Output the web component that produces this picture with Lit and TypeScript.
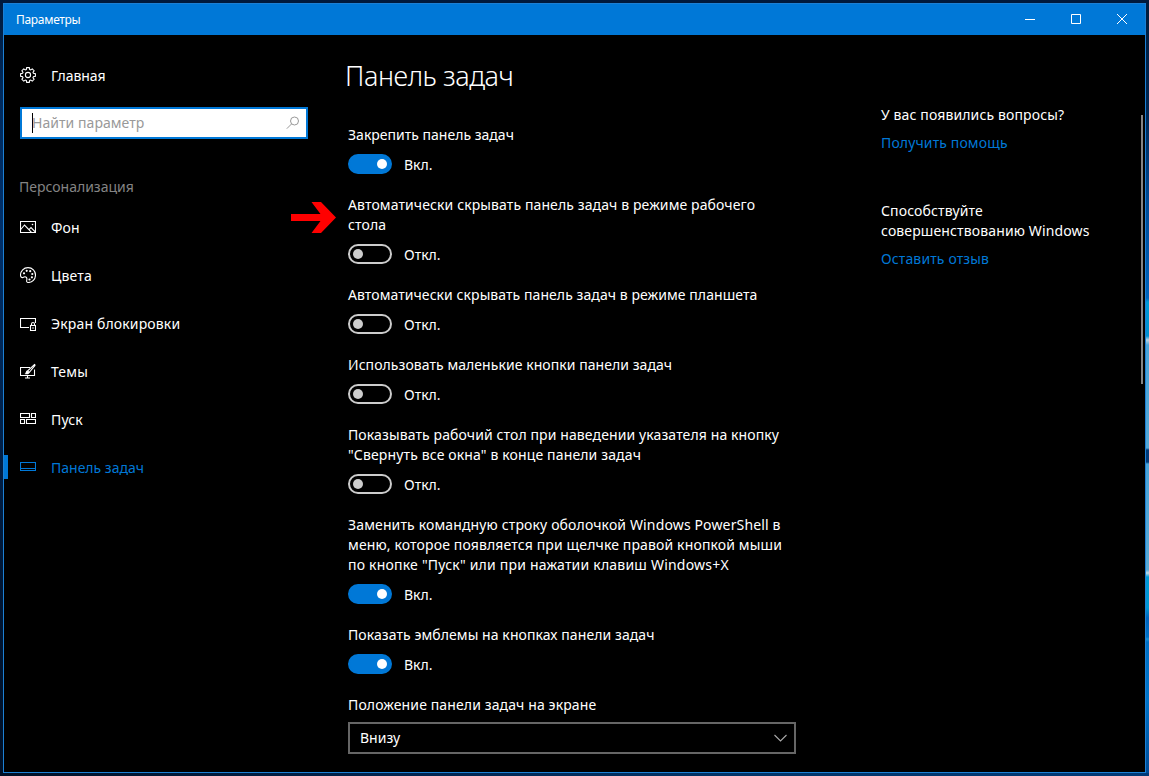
import { LitElement, html, css, svg, nothing } from "lit";
import { customElement, property } from "lit/decorators.js";
import { classMap } from "lit/directives/class-map.js";
import { styleMap } from "lit/directives/style-map.js";

const icons: Record<string, unknown> = {
  home: svg`<path d="M6.7 .6h2.6l.4 2 .9.4 1.7-1.1 1.8 1.8L13 5.4l.4.9 2 .4v2.6l-2 .4-.4.9 1.1 1.7-1.8 1.8-1.7-1.1-.9.4-.4 2H6.700l-.4-2-.9-.4-1.700 1.100-1.800-1.800L3 10.600l-.4-.9-2-.4V6.700l2-.4L3 5.400 1.900 3.700l1.800-1.800L5.400 3l.9-.4z"/><circle cx="8" cy="8" r="2.600"/>`,
  background: svg`<path d="M.5 2.500h15v11H.5z"/><path d="M.7 10.500 4.500 6l7 7.300M9 10.600l2-2 4.500 4.500"/><circle class="dot" cx="12.500" cy="5.500" r=".8"/>`,
  colors: svg`<path d="M.5 8.300C.5 4 3.700.6 8 .6c4.400 0 7.500 3.300 7.500 7.500S12.300 15.500 8.300 15.500c-1.900 0-1.800-1.500-1.500-2.700.4-1.800-.5-3-1.900-3-1.300 0-1.500.9-2.700.8C1 10.500.5 9.500.5 8.300z"/><g class="dot"><circle cx="4" cy="6.300" r="1.100"/><circle cx="6.700" cy="3.800" r="1.100"/><circle cx="10.200" cy="4.200" r="1.100"/><circle cx="12.300" cy="7" r="1.100"/><circle cx="11.900" cy="10.300" r="1.100"/><circle cx="9.500" cy="12.500" r="1.100"/></g>`,
  lock: svg`<path d="M9 12.500H.5v-9h15V8M10.500 10.500h5v5h-5zM11.500 10.300V9a1.500 1.500 0 0 1 3 0v1.300M13 12.300v1.400"/>`,
  themes: svg`<path d="M10 4.500H.5v8h14V6.500M7.500 12.500v2.500M5 15h5"/><path d="M14.600 1.400c.5.3.5.8.2 1.200L9.200 9.500 7.500 8z"/><path class="dot" d="M7 7.500l2.300 2.200c-.5 1.800-2.300 2-4.800 1.300 1.400-.4.900-2.700 2.500-3.500z"/>`,
  start: svg`<path d="M.5 2.500h9v4h-9zM11.500 2.500h4v4h-4zM.5 8.500h4v4h-4zM6.500 8.500h9v4h-9z"/>`,
  taskbar: svg`<path d="M.5 3.500h15v8H.5zM.5 9.500h15"/>`,
};

interface Line {
  text: string;
  tracking: number;
}

interface Setting {
  lines: Line[];
  on: boolean;
  marked?: boolean;
}

const settings: Setting[] = [
  { lines: [{ text: "Закрепить панель задач", tracking: 0.01 }], on: true },
  {
    lines: [
      { text: "Автоматически скрывать панель задач в режиме рабочего", tracking: 0.11 },
      { text: "стола", tracking: 0.1 },
    ],
    on: false,
    marked: true,
  },
  { lines: [{ text: "Автоматически скрывать панель задач в режиме планшета", tracking: 0.07 }], on: false },
  { lines: [{ text: "Использовать маленькие кнопки панели задач", tracking: 0.06 }], on: false },
  {
    lines: [
      { text: "Показывать рабочий стол при наведении указателя на кнопку", tracking: 0.11 },
      { text: "\"Свернуть все окна\" в конце панели задач", tracking: 0.14 },
    ],
    on: false,
  },
  {
    lines: [
      { text: "Заменить командную строку оболочкой Windows PowerShell в", tracking: 0.14 },
      { text: "меню, которое появляется при щелчке правой кнопкой мыши", tracking: 0.14 },
      { text: "по кнопке \"Пуск\" или при нажатии клавиш Windows+X", tracking: 0.21 },
    ],
    on: true,
  },
  { lines: [{ text: "Показать эмблемы на кнопках панели задач", tracking: 0.08 }], on: true },
];

const navigation = [
  { icon: "background", label: "Фон" },
  { icon: "colors", label: "Цвета" },
  { icon: "lock", label: "Экран блокировки" },
  { icon: "themes", label: "Темы" },
  { icon: "start", label: "Пуск" },
  { icon: "taskbar", label: "Панель задач", active: true },
];

@customElement("nav-entry")
export class NavEntry extends LitElement {
  @property() icon = "";
  @property() label = "";
  @property({ type: Boolean }) active = false;

  static styles = css`
    :host { display: block; }
    .entry { display: flex; align-items: center; height: 48px; padding-left: 16px; color: #fff; }
    .active { color: #0078d7; padding-left: 0; }
    .marker { width: 4px; height: 24px; background: #0078d7; margin-right: 12px; }
    svg { width: 16px; height: 16px; fill: none; stroke: currentColor; stroke-width: 1.1; margin-right: 15px; flex: none; }
    .dot { fill: currentColor; stroke: none; }
    .label { line-height: 20px; white-space: nowrap; padding-top: 1px; letter-spacing: .15px; }
    .home .label { letter-spacing: -.1px; }
    .active .label { letter-spacing: 0; }
  `;

  render() {
    return html`<div class=${classMap({ entry: true, active: this.active, home: this.icon === "home" })}>
      ${this.active ? html`<span class="marker"></span>` : nothing}
      <svg viewBox="0 0 16 16">${icons[this.icon]}</svg>
      <span class="label">${this.label}</span>
    </div>`;
  }
}

@customElement("toggle-setting")
export class ToggleSetting extends LitElement {
  @property({ attribute: false }) setting!: Setting;

  static styles = css`
    :host { display: block; position: relative; margin-bottom: 21px; }
    .line { line-height: 20px; white-space: nowrap; }
    .row { display: flex; align-items: center; gap: 12px; height: 20px; margin-top: 9px; }
    .switch { display: flex; align-items: center; box-sizing: border-box; width: 44px; height: 20px; border: 2px solid #ccc; border-radius: 10px; padding: 0 3px; }
    .knob { width: 10px; height: 10px; border-radius: 50%; background: #ccc; }
    .on { background: #0078d7; border-color: #0078d7; justify-content: flex-end; }
    .on .knob { background: #fff; }
    .state { line-height: 20px; padding-top: 2px; }
    .arrow { position: absolute; left: -57px; top: 6px; width: 46px; height: 33px; fill: #f00; }
  `;

  render() {
    const { lines, on, marked } = this.setting;
    return html`
      ${marked ? html`<svg class="arrow" viewBox="0 0 46 33"><path d="M0 13h29.500L20.500 1h9.500L45 16.500 30 32h-9.500l9-12H0z"/></svg>` : nothing}
      ${lines.map((l) => html`<div class="line" style=${styleMap({ letterSpacing: `${l.tracking}px` })}>${l.text}</div>`)}
      <div class="row">
        <div class=${classMap({ switch: true, on })}><div class="knob"></div></div>
        <span class="state">${on ? "Вкл." : "Откл."}</span>
      </div>`;
  }
}

@customElement("app-root")
export class AppRoot extends LitElement {
  static styles = css`
    :host {
      display: block; box-sizing: border-box; width: 1149px; height: 776px; padding: 3px;
      background:
        linear-gradient(#001a3c 0 3px, transparent 3px) 0 0 / 100% 3px no-repeat,
        linear-gradient(90deg, #001026, #00244f 35%, #003468 65%, #003a78) 0 100% / 100% 3px no-repeat,
        linear-gradient(#001a3c, #002a5c 12%, #00306a 30%, #002450 50%, #001634 75%, #001026) 0 0 / 3px 100% no-repeat,
        linear-gradient(#001c3c 0, #00254f 110px, #004a94 200px, #0064bc 298px, #009ad4 302px, #0090d0 336px, #b8d4e4 340px, #4aa4d8 345px, #55a8d6 448px, #003a78 450px, #003a78 462px, #4aa4d8 464px, #5aaad4 570px, #c0dcea 573px, #009ad4 577px, #0096d2 608px, #0064bc 618px, #0070c4 637px, #1890d4 639px, #0070c4 642px, #0074c8 700px, #004a94 776px);
      font-family: "Noto Sans", "Open Sans", sans-serif; font-size: 14px; color: #fff; overflow: hidden;
    }
    .window { display: flex; flex-direction: column; box-sizing: border-box; width: 1143px; height: 770px; border: 1px solid #1c80d4; background: #000; }
    .titlebar { display: flex; align-items: center; justify-content: space-between; height: 31px; background: #0078d7; padding-left: 12px; font-size: 12px; }
    .caption { line-height: 20px; letter-spacing: -.3px; }
    .controls { display: flex; }
    .control { width: 46px; height: 31px; fill: none; stroke: #fff; }
    .body { display: flex; flex: 1; min-height: 0; }
    .sidebar { width: 344px; padding-top: 16px; flex: none; }
    .search { display: flex; align-items: center; box-sizing: border-box; width: 288px; height: 32px; margin: 8px 0 0 16px; border: 2px solid #0078d7; background: #fff; padding: 0 6px 0 10px; color: #999; }
    .caret { width: 1px; height: 20px; background: #000; margin-right: -1px; }
    .placeholder { flex: 1; line-height: 20px; letter-spacing: .05px; }
    .glass { width: 14px; height: 14px; fill: none; stroke: #999; }
    .group { margin: 38px 0 6px 15px; line-height: 20px; color: #848484; }
    .content { width: 533px; flex: none; padding-top: 22px; }
    .title { margin: 0 0 30px -3px; font-size: 27px; font-weight: 350; letter-spacing: -.4px; line-height: 38px; white-space: nowrap; }
    .field { line-height: 20px; letter-spacing: .12px; }
    .select { display: flex; align-items: center; justify-content: space-between; box-sizing: border-box; width: 448px; height: 32px; margin-top: 7px; border: 2px solid #666; padding: 0 7px 0 10px; }
    .value { padding-bottom: 1px; }
    .chevron { width: 13px; height: 8px; fill: none; stroke: #aaa; stroke-width: 1.1; }
    .help { flex: 1; padding-top: 70px; line-height: 20px; white-space: nowrap; letter-spacing: .13px; }
    .link { color: #0078d7; margin-top: 8px; }
    .feedback { margin-top: 48px; }
    .scroll { width: 2px; height: 269px; margin: 80px 2px 0 0; background: #858585; }
  `;

  render() {
    return html`
      <div class="window">
        <div class="titlebar">
          <span class="caption">Параметры</span>
          <div class="controls">
            <svg class="control" viewBox="0 0 46 31"><path d="M18 15.500h10"/></svg>
            <svg class="control" viewBox="0 0 46 31"><path d="M18.500 10.500h9v9h-9z"/></svg>
            <svg class="control" viewBox="0 0 46 31"><path d="M18 10l10 10M28 10l-10 10"/></svg>
          </div>
        </div>
        <div class="body">
          <div class="sidebar">
            <nav-entry icon="home" label="Главная"></nav-entry>
            <div class="search">
              <span class="caret"></span>
              <span class="placeholder">Найти параметр</span>
              <svg class="glass" viewBox="0 0 14 14"><circle cx="8.500" cy="5" r="4"/><path d="M5.600 7.900.8 12.700"/></svg>
            </div>
            <div class="group">Персонализация</div>
            ${navigation.map((n) => html`<nav-entry icon=${n.icon} label=${n.label} ?active=${!!n.active}></nav-entry>`)}
          </div>
          <div class="content">
            <div class="title">Панель задач</div>
            ${settings.map((s) => html`<toggle-setting .setting=${s}></toggle-setting>`)}
            <div class="field">Положение панели задач на экране</div>
            <div class="select">
              <span class="value">Внизу</span>
              <svg class="chevron" viewBox="0 0 13 8"><path d="M.5 1l6 6 6-6"/></svg>
            </div>
          </div>
          <div class="help">
            <div>У вас появились вопросы?</div>
            <div class="link">Получить помощь</div>
            <div class="feedback">Способствуйте<br />совершенствованию Windows</div>
            <div class="link">Оставить отзыв</div>
          </div>
          <div class="scroll"></div>
        </div>
      </div>`;
  }
}
